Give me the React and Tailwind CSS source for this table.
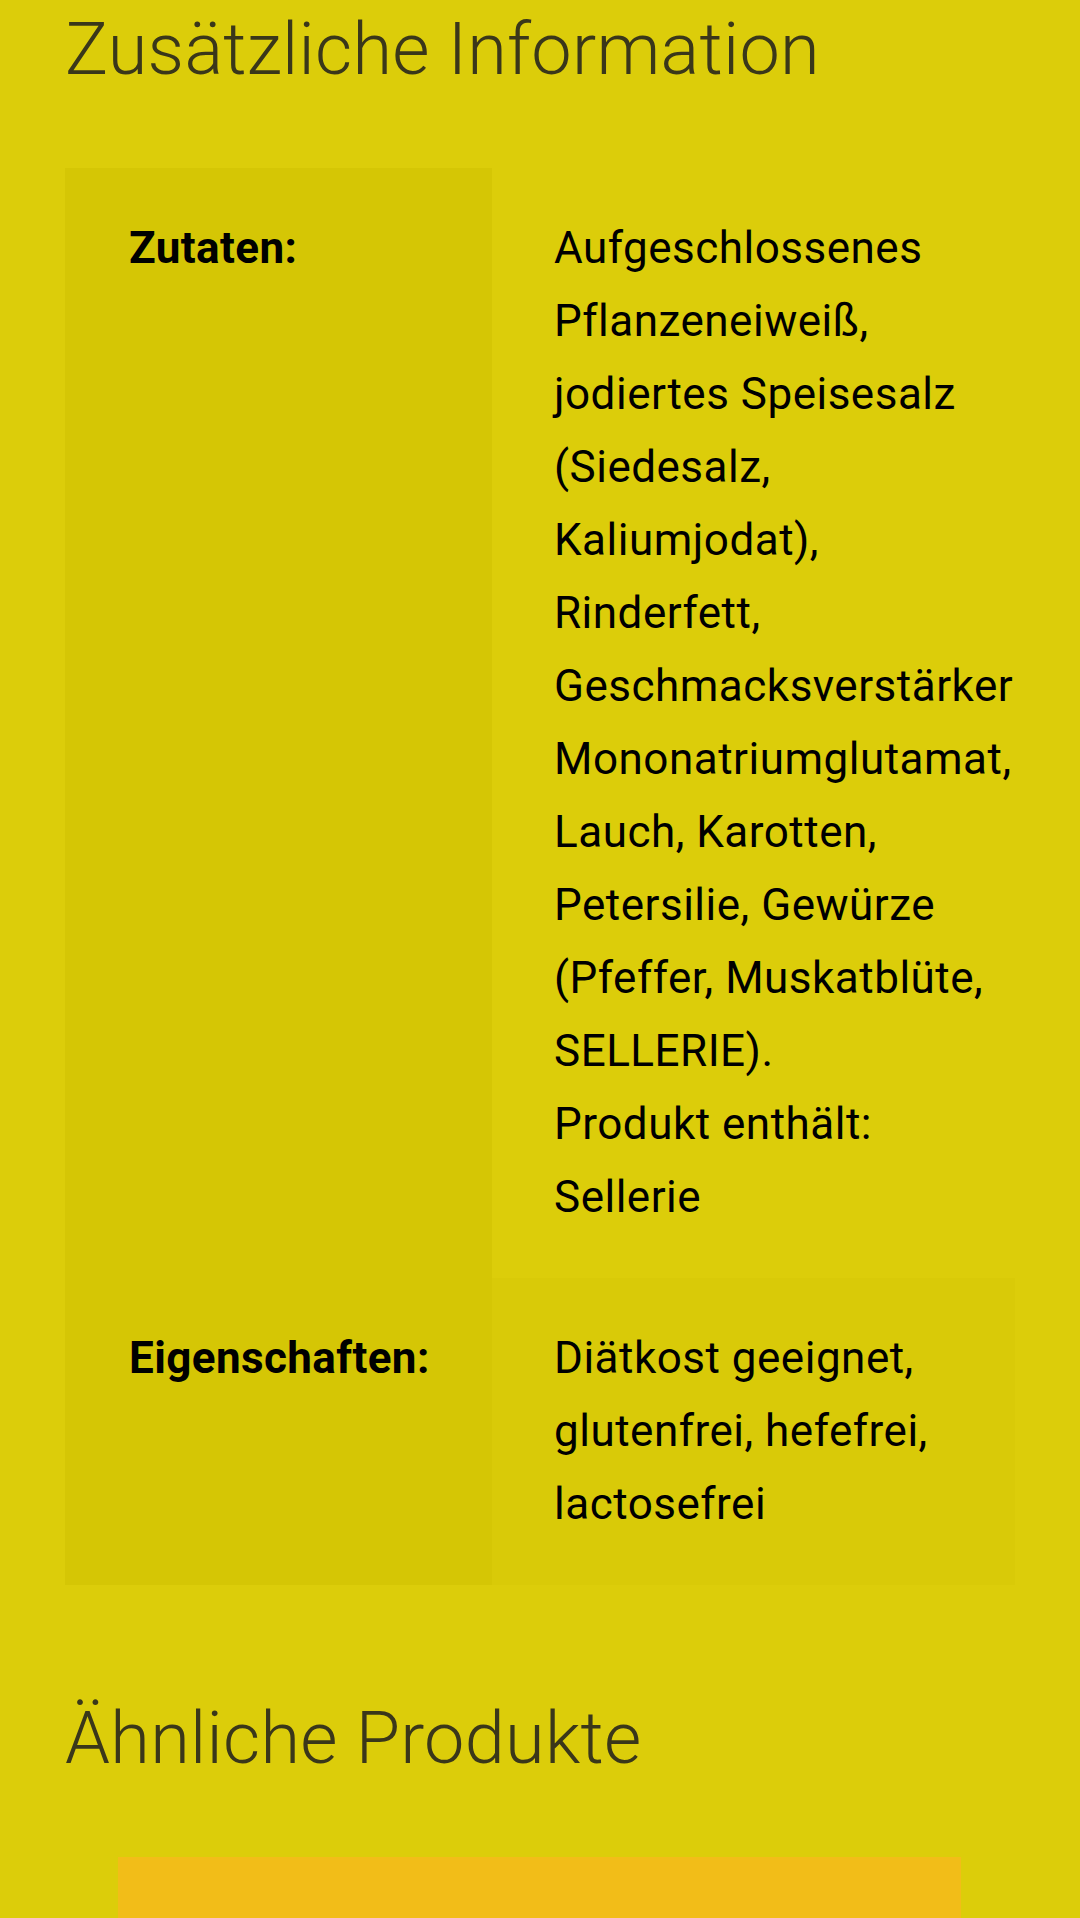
export default function App() {
  const rows = [
    {
      label: "Zutaten:",
      value: (
        <>
          Aufgeschlossenes Pflanzeneiweiß, jodiertes Speisesalz (Siedesalz, Kaliumjodat), Rinderfett, Geschmacksverstärker Mononatriumglutamat, Lauch, Karotten, Petersilie, Gewürze (Pfeffer, Muskatblüte, SELLERIE).
          <br />
          Produkt enthält: Sellerie
        </>
      ),
      valueBg: "",
    },
    {
      label: "Eigenschaften:",
      value: "Diätkost geeignet, glutenfrei, hefefrei, lactosefrei",
      valueBg: "bg-[#d9ca08]",
    },
  ];

  return (
    <div className="h-[1918px] bg-[#dccd0a] px-[65px] font-['Roboto',sans-serif] overflow-hidden">
      <h2 className="pt-[7px] text-[72px] leading-[1.2] tracking-[0.3px] font-light text-[#3a371a] whitespace-nowrap">
        Zusätzliche Information
      </h2>

      <div className="mt-[75px] grid grid-cols-[427px_523px] w-[950px]">
        {rows.map((r) => (
          <div key={r.label} className="contents">
            <div className="bg-[#d5c605] pl-[64px] py-[44px] text-[44px] leading-[73px] tracking-[0.4px] font-bold text-black">
              {r.label}
            </div>
            <div className={`${r.valueBg} pl-[62px] pr-0 py-[44px] text-[44px] leading-[73px] tracking-[0.5px] text-black`}>
              {r.value}
            </div>
          </div>
        ))}
      </div>

      <h2 className="mt-[111px] text-[72px] leading-[1.2] tracking-[0.3px] font-light text-[#3a371a]">
        Ähnliche Produkte
      </h2>

      <div className="mt-[74px] ml-[53px] w-[843px] h-[200px] bg-[#f2bd18]" />
    </div>
  );
}
